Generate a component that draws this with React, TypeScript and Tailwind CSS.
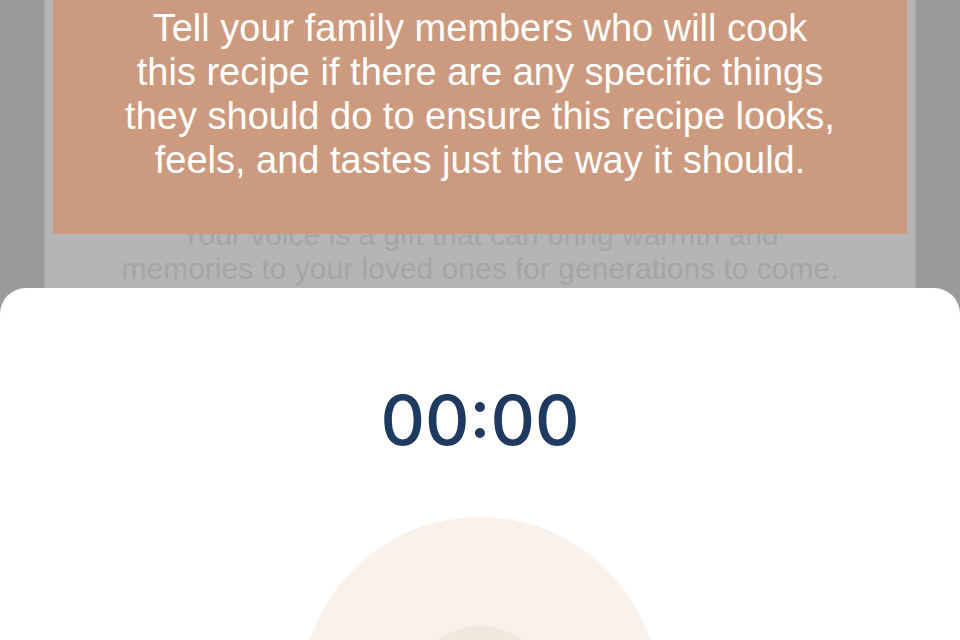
import React from 'react';

const App: React.FC = () => {
  return (
    <div className="relative w-full h-[640px] overflow-hidden bg-[#9b9b9b]" style={{ fontFamily: '"Liberation Sans", Arial, sans-serif' }}>
      {/* Dimmed page behind the sheet */}
      <div className="mx-[44px] h-full bg-[#b5b5b5] border-x border-[#a9adad]">
        <div className="relative z-10 mx-[8px] h-[234px] bg-[#cc9a7e] pt-[6px]">
          <p className="text-center text-white text-[38px] leading-[44px]">
            Tell your family members who will cook
            <br />
            this recipe if there are any specific things
            <br />
            they should do to ensure this recipe looks,
            <br />
            feels, and tastes just the way it should.
          </p>
        </div>
        <p className="-mt-[16px] text-center text-[#a5a5a5] text-[30px] leading-[34px] whitespace-nowrap">
          Your voice is a gift that can bring warmth and
          <br />
          memories to your loved ones for generations to come.
        </p>
      </div>

      {/* Recording bottom sheet */}
      <div className="absolute left-0 right-0 top-[288px] bottom-0 bg-white rounded-t-[26px] flex flex-col items-center">
        <div
          className="mt-[92px] text-[69px] leading-[80px] font-medium text-[#1f3a60]"
          style={{ fontFamily: 'Inter, "Noto Sans", sans-serif' }}
        >
          00:00
        </div>
        <div className="mt-[57px] w-[358px] h-[358px] shrink-0 rounded-full bg-[#f9f1ea] flex items-center justify-center">
          <div className="w-[140px] h-[140px] rounded-full bg-[#f2e7dd]" />
        </div>
      </div>
    </div>
  );
};

export default App;
